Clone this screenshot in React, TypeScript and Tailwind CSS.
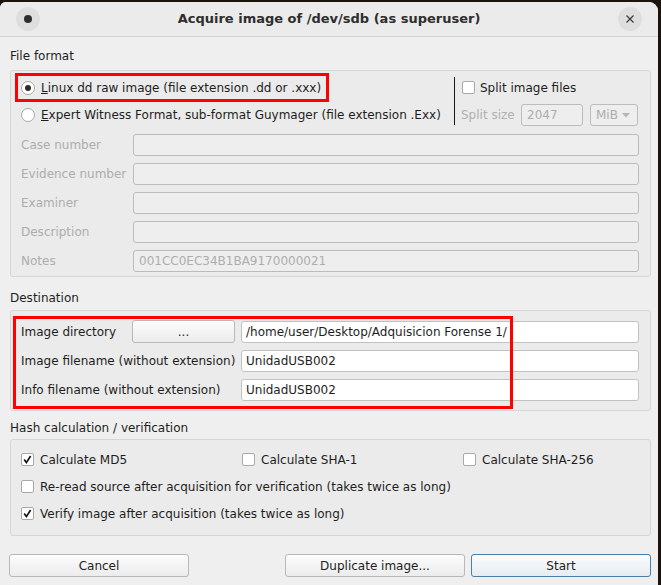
import React from 'react';

const font = { fontFamily: '"DejaVu Sans", "Liberation Sans", sans-serif' };

const Radio: React.FC<{ checked?: boolean }> = ({ checked }) => (
  <span className="w-[14px] h-[14px] rounded-full border border-[#a9a9a9] bg-white flex items-center justify-center shrink-0">
    {checked && <span className="w-[6px] h-[6px] rounded-full bg-[#2b2b2b]" />}
  </span>
);

const Check: React.FC<{ checked?: boolean }> = ({ checked }) => (
  <span className="w-[13px] h-[13px] rounded-[2px] border border-[#a9a9a9] bg-white flex items-center justify-center shrink-0">
    {checked && (
      <svg width="11" height="11" viewBox="0 0 11 11">
        <path d="M2.2 5.6 L4.4 8.6 L8.6 2" fill="none" stroke="#111" strokeWidth="1.7" />
      </svg>
    )}
  </span>
);

const DisabledInput: React.FC<{ value?: string; className?: string }> = ({ value, className }) => (
  <div className={`h-[22px] rounded-[3px] border border-[#bcbcbc] bg-[#eeeeee] px-[5px] flex items-center text-[#adadad] ${className ?? ''}`}>
    {value}
  </div>
);

const TextInput: React.FC<{ value: string }> = ({ value }) => (
  <div className="h-[22px] flex-1 rounded-[3px] border border-[#c2c2c2] bg-white px-[4px] flex items-center text-[#1e1e1e]">
    {value}
  </div>
);

const Button: React.FC<{ label: string; primary?: boolean; className?: string }> = ({ label, primary, className }) => (
  <div
    className={`h-[23px] flex items-center justify-center rounded-[3px] border ${
      primary
        ? 'border-[#4d7ea8] bg-gradient-to-b from-[#fbfcfd] to-[#e6ecf1]'
        : 'border-[#b8b8b8] bg-gradient-to-b from-[#fcfcfc] to-[#ececec]'
    } text-[#1e1e1e] ${className ?? ''}`}
  >
    {label}
  </div>
);

export default function App() {
  const rows = [
    ['Case number', ''],
    ['Evidence number', ''],
    ['Examiner', ''],
    ['Description', ''],
    ['Notes', '001CC0EC34B1BA9170000021'],
  ];

  return (
    <div className="w-[661px] h-[585px] bg-[#1b140d] overflow-hidden text-[12px] leading-[14px] text-[#1e1e1e]" style={font}>
      <div className="mt-[2px] w-[658px] h-[583px] bg-[#efefef] rounded-tl-[6px] rounded-tr-[9px] overflow-hidden flex flex-col">
        {/* title bar */}
        <div className="h-[35px] shrink-0 bg-[#ebebeb] border-b border-[#d3d3d3] flex items-center justify-between px-[16px]">
          <div className="w-[24px] h-[24px] rounded-full bg-[#dedede] flex items-center justify-center">
            <span className="w-[8px] h-[8px] rounded-full bg-[#2e2e2e]" />
          </div>
          <div className="text-[13px] font-bold text-[#2e2e2e]">Acquire image of /dev/sdb (as superuser)</div>
          <div className="w-[24px] h-[24px] rounded-full bg-[#dedede] flex items-center justify-center">
            <svg width="10" height="10" viewBox="0 0 10 10">
              <path d="M1.5 1.5 L8.5 8.5 M8.5 1.5 L1.5 8.5" stroke="#3a3a3a" strokeWidth="1.2" />
            </svg>
          </div>
        </div>

        {/* File format */}
        <div className="pt-[12px] pb-[7px] px-[10px]">File format</div>
        <div className="relative ml-[10px] mr-[7px] border border-[#d6d6d6] bg-[#ebebeb] rounded-[3px] pl-[10px] pr-[11px] pt-[3px] pb-[4px]">
          <div className="flex">
            <div className="w-[433px] flex flex-col">
              <div className="h-[27px] flex items-center gap-[6px]">
                <Radio checked />
                <span>
                  <span className="underline">L</span>inux dd raw image (file extension .dd or .xxx)
                </span>
              </div>
              <div className="h-[27px] flex items-center gap-[6px]">
                <Radio />
                <span>
                  <span className="underline">E</span>xpert Witness Format, sub-format Guymager (file extension .Exx)
                </span>
              </div>
            </div>
            <div className="w-[1px] bg-[#1a1a1a] my-[3px]" />
            <div className="flex-1 flex flex-col pl-[7px]">
              <div className="h-[27px] flex items-center gap-[5px]">
                <Check />
                <span>Split image files</span>
              </div>
              <div className="h-[27px] flex items-center -ml-[1px] pt-[1px]">
                <span className="text-[#b0b0b0] w-[60px]">Split size</span>
                <DisabledInput value="2047" className="w-[62px]" />
                <div className="ml-[7px] w-[48px] h-[22px] rounded-[3px] border border-[#bcbcbc] bg-[#eeeeee] flex items-center justify-between pl-[5px] pr-[7px] text-[#adadad]">
                  <span>MiB</span>
                  <svg width="8" height="5" viewBox="0 0 8 5">
                    <path d="M0 0 L8 0 L4 4.5 Z" fill="#b5b5b5" />
                  </svg>
                </div>
              </div>
            </div>
          </div>
          <div className="mt-[6px] flex flex-col gap-[7px]">
            {rows.map(([label, value]) => (
              <div key={label} className="flex items-center">
                <span className="w-[112px] text-[#adadad]">{label}</span>
                <DisabledInput value={value} className="flex-1" />
              </div>
            ))}
          </div>
          <div className="absolute left-[4px] top-[2px] w-[314px] h-[29px] border-[3px] border-[#ff0000]" />
        </div>

        {/* Destination */}
        <div className="pt-[14px] pb-[5px] px-[10px]">Destination</div>
        <div className="relative ml-[10px] mr-[7px] border border-[#d6d6d6] bg-[#ebebeb] rounded-[3px] pl-[10px] pr-[11px] pt-[9px] pb-[9px] flex flex-col gap-[7px]">
          <div className="flex items-center">
            <span className="w-[111px]">Image directory</span>
            <Button label="..." className="w-[103px]" />
            <span className="w-[6px]" />
            <TextInput value="/home/user/Desktop/Adquisicion Forense 1/" />
          </div>
          <div className="flex items-center">
            <span className="w-[220px]">Image filename (without extension)</span>
            <TextInput value="UnidadUSB002" />
          </div>
          <div className="flex items-center">
            <span className="w-[220px]">Info filename (without extension)</span>
            <TextInput value="UnidadUSB002" />
          </div>
          <div className="absolute left-[2px] top-[5px] w-[500px] h-[93px] border-[3px] border-[#ff0000]" />
        </div>

        {/* Hash */}
        <div className="pt-[10px] pb-[4px] px-[10px]">Hash calculation / verification</div>
        <div className="ml-[10px] mr-[7px] border border-[#d6d6d6] bg-[#ebebeb] rounded-[3px] pl-[10px] pr-[11px] pt-[6px] pb-[8px]">
          <div className="grid grid-cols-[221px_221px_1fr]">
            <div className="h-[27px] flex items-center gap-[6px]">
              <Check checked />
              <span>Calculate MD5</span>
            </div>
            <div className="h-[27px] flex items-center gap-[6px]">
              <Check />
              <span>Calculate SHA-1</span>
            </div>
            <div className="h-[27px] flex items-center gap-[6px]">
              <Check />
              <span>Calculate SHA-256</span>
            </div>
          </div>
          <div className="h-[27px] flex items-center gap-[6px]">
            <Check />
            <span>Re-read source after acquisition for verification (takes twice as long)</span>
          </div>
          <div className="h-[27px] flex items-center gap-[6px]">
            <Check checked />
            <span>Verify image after acquisition (takes twice as long)</span>
          </div>
        </div>

        {/* buttons */}
        <div className="mt-[18px] pl-[9px] pr-[7px] flex items-center">
          <Button label="Cancel" className="w-[180px]" />
          <div className="flex-1" />
          <Button label="Duplicate image..." className="w-[180px]" />
          <Button label="Start" primary className="w-[180px] ml-[6px]" />
        </div>
      </div>
    </div>
  );
}
